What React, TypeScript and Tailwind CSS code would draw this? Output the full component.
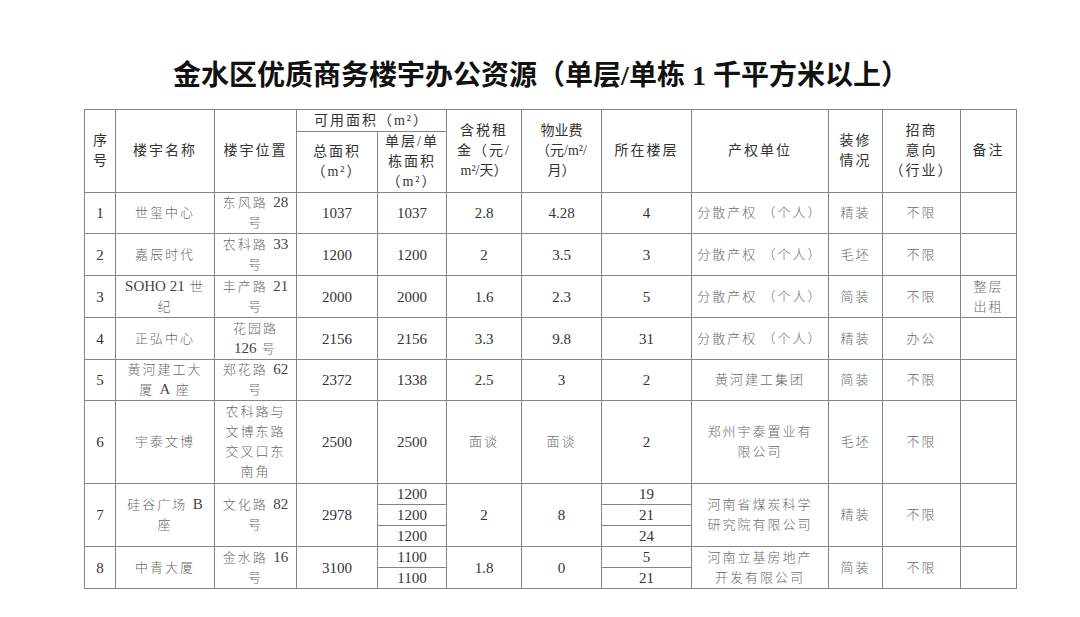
import React from 'react';

type Row = {
  no: string;
  name: React.ReactNode;
  addr: React.ReactNode;
  total: string;
  units: string[];
  rent: string;
  fee: string;
  floors: string[];
  owner: React.ReactNode;
  deco: string;
  intent: string;
  note?: React.ReactNode;
  h: string;
};

// latin / digits inside chinese cells keep normal spacing
const L = ({ children }: { children: React.ReactNode }) => (
  <span className="tracking-normal text-[15px] leading-none text-[#444] font-normal">{children}</span>
);

const rows: Row[] = [
  { no: '1', name: '世玺中心', addr: <>东风路 <L>28</L><br />号</>, total: '1037', units: ['1037'], rent: '2.8', fee: '4.28', floors: ['4'], owner: '分散产权 （个人）', deco: '精装', intent: '不限', h: 'h-[41px]' },
  { no: '2', name: '嘉辰时代', addr: <>农科路 <L>33</L><br />号</>, total: '1200', units: ['1200'], rent: '2', fee: '3.5', floors: ['3'], owner: '分散产权 （个人）', deco: '毛坯', intent: '不限', h: 'h-[42px]' },
  { no: '3', name: <><L>SOHO 21</L> 世<br />纪</>, addr: <>丰产路 <L>21</L><br />号</>, total: '2000', units: ['2000'], rent: '1.6', fee: '2.3', floors: ['5'], owner: '分散产权 （个人）', deco: '简装', intent: '不限', note: <>整层<br />出租</>, h: 'h-[42px]' },
  { no: '4', name: '正弘中心', addr: <>花园路<br /><L>126</L> 号</>, total: '2156', units: ['2156'], rent: '3.3', fee: '9.8', floors: ['31'], owner: '分散产权 （个人）', deco: '精装', intent: '办公', h: 'h-[42px]' },
  { no: '5', name: <>黄河建工大<br />厦 <L>A</L> 座</>, addr: <>郑花路 <L>62</L><br />号</>, total: '2372', units: ['1338'], rent: '2.5', fee: '3', floors: ['2'], owner: '黄河建工集团', deco: '简装', intent: '不限', h: 'h-[41px]' },
  { no: '6', name: '宇泰文博', addr: <>农科路与<br />文博东路<br />交叉口东<br />南角</>, total: '2500', units: ['2500'], rent: '面谈', fee: '面谈', floors: ['2'], owner: <>郑州宇泰置业有<br />限公司</>, deco: '毛坯', intent: '不限', h: 'h-[83px]' },
  { no: '7', name: <>硅谷广场 <L>B</L><br />座</>, addr: <>文化路 <L>82</L><br />号</>, total: '2978', units: ['1200', '1200', '1200'], rent: '2', fee: '8', floors: ['19', '21', '24'], owner: <>河南省煤炭科学<br />研究院有限公司</>, deco: '精装', intent: '不限', h: 'h-[21px]' },
  { no: '8', name: '中青大厦', addr: <>金水路 <L>16</L><br />号</>, total: '3100', units: ['1100', '1100'], rent: '1.8', fee: '0', floors: ['5', '21'], owner: <>河南立基房地产<br />开发有限公司</>, deco: '简装', intent: '不限', h: 'h-[21px]' },
];

const cell = 'border border-[#858585] p-0 text-center align-middle leading-[20px]';
const cn = 'text-[13px] tracking-[2px] text-[#6a6a6a] font-light';
const num = 'text-[15px] text-[#333]';
const head = 'text-[14px] tracking-[2px] text-[#333] font-normal';

export default function App() {
  return (
    <div className="w-[1080px] h-[617px] bg-white font-['Liberation_Serif','Noto_Sans_CJK_SC',serif] overflow-hidden">
      <h1 className="pt-[58px] h-[109px] text-center text-[28px] leading-[36px] font-bold text-[#111] pl-[2px]">
        金水区优质商务楼宇办公资源（单层/单栋 1 千平方米以上）
      </h1>
      <table className="ml-[84px] w-[932px] table-fixed border-collapse">
        <colgroup>
          <col className="w-[31px]" />
          <col className="w-[99px]" />
          <col className="w-[82px]" />
          <col className="w-[81px]" />
          <col className="w-[69px]" />
          <col className="w-[75px]" />
          <col className="w-[80px]" />
          <col className="w-[90px]" />
          <col className="w-[137px]" />
          <col className="w-[54px]" />
          <col className="w-[78px]" />
          <col className="w-[56px]" />
        </colgroup>
        <thead>
          <tr className="h-[22px]">
            <th rowSpan={2} className={`${cell} ${head} tracking-normal`}>序<br />号</th>
            <th rowSpan={2} className={`${cell} ${head}`}>楼宇名称</th>
            <th rowSpan={2} className={`${cell} ${head}`}>楼宇位置</th>
            <th colSpan={2} className={`${cell} ${head}`}>可用面积（m²）</th>
            <th rowSpan={2} className={`${cell} ${head}`}>含税租<br />金（元/<br /><span className="tracking-normal">m²/天）</span></th>
            <th rowSpan={2} className={`${cell} ${head} tracking-normal`}>物业费<br />（元/m²/<br />月）</th>
            <th rowSpan={2} className={`${cell} ${head}`}>所在楼层</th>
            <th rowSpan={2} className={`${cell} ${head}`}>产权单位</th>
            <th rowSpan={2} className={`${cell} ${head}`}>装修<br />情况</th>
            <th rowSpan={2} className={`${cell} ${head}`}>招商<br />意向<br />（行业）</th>
            <th rowSpan={2} className={`${cell} ${head}`}>备注</th>
          </tr>
          <tr className="h-[61px]">
            <th className={`${cell} ${head}`}>总面积<br />（m²）</th>
            <th className={`${cell} ${head}`}>单层/单<br />栋面积<br />（m²）</th>
          </tr>
        </thead>
        <tbody>
          {rows.map((r) =>
            r.units.map((u, i) => {
              const n = r.units.length;
              return (
                <tr key={`${r.no}-${i}`} className={r.h}>
                  {i === 0 && (
                    <>
                      <td rowSpan={n} className={`${cell} ${num}`}>{r.no}</td>
                      <td rowSpan={n} className={`${cell} ${cn}`}>{r.name}</td>
                      <td rowSpan={n} className={`${cell} ${cn}`}>{r.addr}</td>
                      <td rowSpan={n} className={`${cell} ${num}`}>{r.total}</td>
                    </>
                  )}
                  <td className={`${cell} ${num}`}>{u}</td>
                  {i === 0 && (
                    <>
                      <td rowSpan={n} className={`${cell} ${r.rent === '面谈' ? cn : num}`}>{r.rent}</td>
                      <td rowSpan={n} className={`${cell} ${r.fee === '面谈' ? cn : num}`}>{r.fee}</td>
                    </>
                  )}
                  <td className={`${cell} ${num}`}>{r.floors[i]}</td>
                  {i === 0 && (
                    <>
                      <td rowSpan={n} className={`${cell} ${cn}`}>{r.owner}</td>
                      <td rowSpan={n} className={`${cell} ${cn}`}>{r.deco}</td>
                      <td rowSpan={n} className={`${cell} ${cn}`}>{r.intent}</td>
                      <td rowSpan={n} className={`${cell} ${cn}`}>{r.note}</td>
                    </>
                  )}
                </tr>
              );
            })
          )}
        </tbody>
      </table>
    </div>
  );
}
